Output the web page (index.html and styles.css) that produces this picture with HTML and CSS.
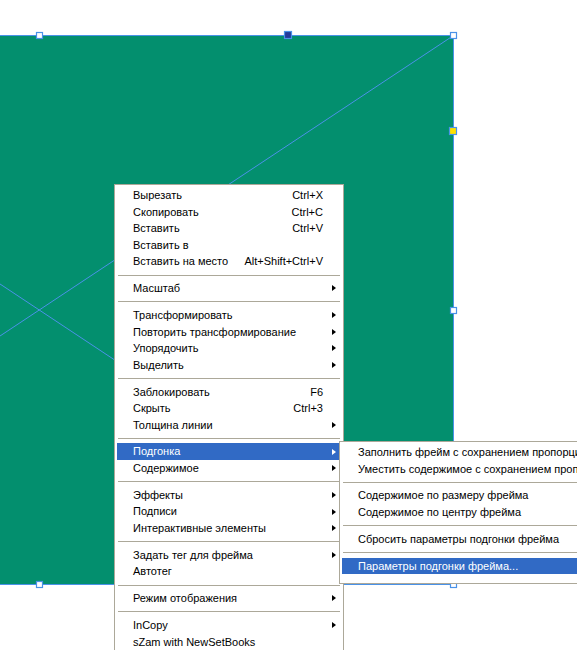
FILE: index.html
```html
<!DOCTYPE html>
<html lang="ru">
<head>
<meta charset="utf-8">
<title>Контекстное меню</title>
<link rel="stylesheet" href="styles.css">
</head>
<body>
<div class="canvas">
  <svg class="art" width="577" height="650" viewBox="0 0 577 650" xmlns="http://www.w3.org/2000/svg">
    <rect x="0" y="35" width="453.5" height="549.5" fill="#038f6e"/>
    <g stroke="#4a92e8" stroke-width="1" fill="none">
      <path d="M0 35.5 H453.5 V584.5 H0"/>
      <path d="M453.5 35.5 L-375 584.5"/>
      <path d="M-375 35.5 L453.5 584.5"/>
    </g>
    <g stroke="#4a92e8" stroke-width="1.2">
      <rect x="36.5" y="32.5" width="6" height="6" fill="#ffffff"/>
      <rect x="450.5" y="32.5" width="6" height="6" fill="#ffffff"/>
      <rect x="450.5" y="307.5" width="6" height="6" fill="#ffffff"/>
      <rect x="36.5" y="581.5" width="6" height="6" fill="#ffffff"/>
      <rect x="450.5" y="581.5" width="6" height="6" fill="#ffffff"/>
      <rect x="284.5" y="31.5" width="7" height="7" fill="#243a9a"/>
      <rect x="449.5" y="127.5" width="7" height="7" fill="#ffe100"/>
    </g>
  </svg>

  <div class="menu main">
    <div class="item"><span class="label">Вырезать</span><span class="key">Ctrl+X</span><span class="arrow-cell"></span></div>
    <div class="item"><span class="label">Скопировать</span><span class="key">Ctrl+C</span><span class="arrow-cell"></span></div>
    <div class="item"><span class="label">Вставить</span><span class="key">Ctrl+V</span><span class="arrow-cell"></span></div>
    <div class="item"><span class="label">Вставить в</span><span class="key"></span><span class="arrow-cell"></span></div>
    <div class="item"><span class="label">Вставить на место</span><span class="key">Alt+Shift+Ctrl+V</span><span class="arrow-cell"></span></div>
    <div class="sep"></div>
    <div class="item"><span class="label">Масштаб</span><span class="key"></span><span class="arrow-cell"><i class="arrow"></i></span></div>
    <div class="sep"></div>
    <div class="item"><span class="label">Трансформировать</span><span class="key"></span><span class="arrow-cell"><i class="arrow"></i></span></div>
    <div class="item"><span class="label">Повторить трансформирование</span><span class="key"></span><span class="arrow-cell"><i class="arrow"></i></span></div>
    <div class="item"><span class="label">Упорядочить</span><span class="key"></span><span class="arrow-cell"><i class="arrow"></i></span></div>
    <div class="item"><span class="label">Выделить</span><span class="key"></span><span class="arrow-cell"><i class="arrow"></i></span></div>
    <div class="sep"></div>
    <div class="item"><span class="label">Заблокировать</span><span class="key">F6</span><span class="arrow-cell"></span></div>
    <div class="item"><span class="label">Скрыть</span><span class="key">Ctrl+3</span><span class="arrow-cell"></span></div>
    <div class="item"><span class="label">Толщина линии</span><span class="key"></span><span class="arrow-cell"><i class="arrow"></i></span></div>
    <div class="sep"></div>
    <div class="item active"><span class="label">Подгонка</span><span class="key"></span><span class="arrow-cell"><i class="arrow"></i></span></div>
    <div class="item"><span class="label">Содержимое</span><span class="key"></span><span class="arrow-cell"><i class="arrow"></i></span></div>
    <div class="sep"></div>
    <div class="item"><span class="label">Эффекты</span><span class="key"></span><span class="arrow-cell"><i class="arrow"></i></span></div>
    <div class="item"><span class="label">Подписи</span><span class="key"></span><span class="arrow-cell"><i class="arrow"></i></span></div>
    <div class="item"><span class="label">Интерактивные элементы</span><span class="key"></span><span class="arrow-cell"><i class="arrow"></i></span></div>
    <div class="sep"></div>
    <div class="item"><span class="label">Задать тег для фрейма</span><span class="key"></span><span class="arrow-cell"><i class="arrow"></i></span></div>
    <div class="item"><span class="label">Автотег</span><span class="key"></span><span class="arrow-cell"></span></div>
    <div class="sep"></div>
    <div class="item"><span class="label">Режим отображения</span><span class="key"></span><span class="arrow-cell"><i class="arrow"></i></span></div>
    <div class="sep"></div>
    <div class="item"><span class="label">InCopy</span><span class="key"></span><span class="arrow-cell"><i class="arrow"></i></span></div>
    <div class="item"><span class="label">sZam with NewSetBooks</span><span class="key"></span><span class="arrow-cell"></span></div>
    <div class="item"><span class="label">&nbsp;</span><span class="key"></span><span class="arrow-cell"></span></div>
  </div>

  <div class="menu sub">
    <div class="item"><span class="label">Заполнить фрейм с сохранением пропорций</span></div>
    <div class="item"><span class="label">Уместить содержимое с сохранением пропорций</span></div>
    <div class="sep"></div>
    <div class="item"><span class="label">Содержимое по размеру фрейма</span></div>
    <div class="item"><span class="label">Содержимое по центру фрейма</span></div>
    <div class="sep"></div>
    <div class="item"><span class="label">Сбросить параметры подгонки фрейма</span></div>
    <div class="sep"></div>
    <div class="item active"><span class="label">Параметры подгонки фрейма...</span></div>
  </div>
</div>
</body>
</html>
```

FILE: styles.css
```css
html, body {
  margin: 0;
  padding: 0;
  background: #ffffff;
}

.canvas {
  position: relative;
  width: 577px;
  height: 650px;
  overflow: hidden;
  background: #ffffff;
  font-family: "Liberation Sans", Arial, sans-serif;
  font-size: 11px;
  color: #000000;
}

.art {
  position: absolute;
  left: 0;
  top: 0;
  display: block;
}

.menu {
  position: absolute;
  background: #ffffff;
  border: 1px solid #aca899;
  padding: 2px;
  box-sizing: border-box;
}

.main {
  left: 114px;
  top: 184px;
  width: 230px;
}

.sub {
  left: 339px;
  top: 441px;
  width: 260px;
  padding-bottom: 9px;
}

.item {
  display: flex;
  align-items: center;
  height: 16.6px;
  line-height: 16.6px;
  padding-left: 16px;
  white-space: nowrap;
}

.label {
  flex: 1 1 auto;
}

.key {
  flex: 0 0 auto;
}

.arrow-cell {
  flex: 0 0 18px;
  width: 18px;
  height: 16px;
  display: flex;
  align-items: center;
}

.arrow {
  display: block;
  width: 0;
  height: 0;
  margin-left: 9px;
  border-top: 3.5px solid transparent;
  border-bottom: 3.5px solid transparent;
  border-left: 4px solid #000000;
}

.sep {
  height: 1px;
  margin: 4.6px 1px;
  background: #aca899;
}

.item.active {
  background: #316ac5;
  color: #ffffff;
}

.item.active .arrow {
  border-left-color: #ffffff;
}
```
